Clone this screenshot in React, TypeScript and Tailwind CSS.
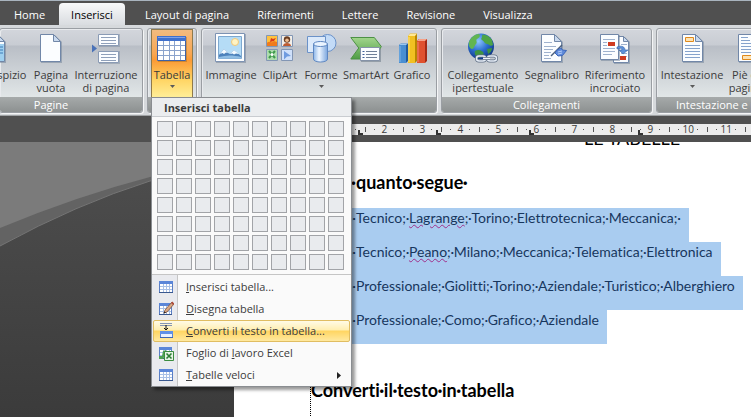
import { Fragment } from 'react';
import type { ReactNode } from 'react';
import clsx from 'clsx';

const tabs = ['Home', 'Inserisci', 'Layout di pagina', 'Riferimenti', 'Lettere', 'Revisione', 'Visualizza'];

/* ---------- Large ribbon icons ---------- */

function Icon({ children }: { children: ReactNode }) {
  return (
    <svg className="w-8 h-8 shrink-0" viewBox="0 0 32 32" fill="none" aria-hidden="true">
      {children}
    </svg>
  );
}

function PageShape({ x = 5, y = 2, w = 21, h = 28, fold = 7 }) {
  return (
    <>
      <path d={`M${x + 1} ${y + 1}h${w - fold}l${fold} ${fold}v${h - fold}h-${w}z`} fill="#6d7f96" opacity="0.5" />
      <path
        d={`M${x + 0.5} ${y + 0.5}h${w - fold - 1}l${fold} ${fold}v${h - fold - 1}h-${w - 1}z`}
        fill="#fbfdff"
        stroke="#7187a8"
      />
      <path d={`M${x + w - fold - 0.5} ${y + 0.5}v${fold}h${fold}z`} fill="#c9d9ee" stroke="#7187a8" />
    </>
  );
}

const CoverIcon = () => (
  <Icon>
    <PageShape x={5} w={21} />
    <path d="M7 12h18v17H7z" fill="#9fd0f0" />
    <path d="M18 15h6M18 18h6M18 21h6" stroke="#3d7db8" />
  </Icon>
);

const BlankPageIcon = () => (
  <Icon>
    <PageShape />
  </Icon>
);

const PageBreakIcon = () => (
  <Icon>
    <path d="M9 2h21v13H9zM9 19h21v13H9z" fill="#6d7f96" opacity="0.4" />
    <path d="M8.500 2.500h20v11h-20zM8.500 19.500h20v11h-20z" fill="#fbfdff" stroke="#8a9bb5" />
    <path d="M11 5.500h15M11 8.500h15M11 11.500h15M11 22.500h15M11 25.500h15M11 28.500h15" stroke="#8fa0ba" />
    <path d="M2 12.500l5 4-5 4z" fill="#4a72b8" />
  </Icon>
);

const TableIcon = () => (
  <Icon>
    <path d="M2 5h29v25H2z" fill="#7a5a20" opacity="0.35" />
    <path d="M1.500 4.500h28v24h-28z" fill="#fff" stroke="#3e62a8" />
    <path d="M1 4h29v5H1z" fill="#4070cc" />
    <path d="M2 5h27v1H2z" fill="#7fa2e8" />
    <path d="M2 13.500h27M2 18.500h27M2 23.500h27M7.500 9v19M13.500 9v19M18.500 9v19M24.500 9v19" stroke="#8ba3cc" />
  </Icon>
);

const ImageIcon = () => (
  <Icon>
    <path d="M1 2h30v29H1z" fill="#5d6f88" opacity="0.4" />
    <path d="M.5 1.500h29v28H.5z" fill="#fdfeff" stroke="#7d93b3" />
    <path d="M3.500 4.500h23v22h-23z" fill="#b5dcf6" stroke="#7ea9d0" />
    <circle cx="20" cy="10" r="3.500" fill="#fff3c4" stroke="#f0c878" />
    <path d="M4 23l5-6 4 4 2 1 4-4 7 6v2H4z" fill="#4d82bc" />
    <path d="M5 22l4-5 4 4-2-.5-2 1.500-1.500-1zM15 22l4-4 5 4-3-.5-2 1-1.500-1z" fill="#f3faff" />
    <path d="M4 25c7-2 14-2 22 0v1.500H4z" fill="#8fbde4" />
  </Icon>
);

const ClipArtIcon = () => (
  <Icon>
    <path d="M2.500 3.500h11v11h-11z" fill="#ffc23e" stroke="#8296b4" />
    <path d="M3 11c3-3 4 1 7-2l3 1v4H3z" fill="#f07a1c" />
    <path d="M7 6l2 1 3-1-2 3-4 1z" fill="#d93a1c" />
    <path d="M17.500 3.500h11v11h-11z" fill="#f3efe9" stroke="#8296b4" />
    <circle cx="23" cy="7.500" r="3.200" fill="#6b3d22" />
    <circle cx="23" cy="8.300" r="1.800" fill="#f0bd90" />
    <path d="M19 14c0-4 8-4 8 0z" fill="#bd5c31" />
    <path d="M2.500 17.500h11v11h-11z" fill="#aedcae" stroke="#8296b4" />
    <path d="M5 19l6 7M11 19l-6 7" stroke="#3f9a4c" strokeWidth="2" />
    <circle cx="8" cy="22.500" r="1.500" fill="#fff" />
    <path d="M17.500 17.500h11v11h-11z" fill="#cfe0fa" stroke="#8296b4" />
    <path d="M20 19l7 5-4 .5-3 3z" fill="#6f9be0" />
  </Icon>
);

const ShapesIcon = () => (
  <Icon>
    <defs>
      <linearGradient id="cyl" x1="0" x2="1">
        <stop offset="0" stopColor="#8db6e8" />
        <stop offset="0.4" stopColor="#eef6ff" />
        <stop offset="1" stopColor="#7ba6de" />
      </linearGradient>
    </defs>
    <circle cx="22.500" cy="11" r="8.500" fill="#c3dbf7" stroke="#6b92c9" />
    <path d="M2.500 4.500h18v16h-18z" fill="#dceafb" stroke="#6b92c9" />
    <path d="M8.500 12v15c0 4 14 4 14 0V12z" fill="url(#cyl)" stroke="#5f88c2" />
    <ellipse cx="15.500" cy="12" rx="7" ry="2.500" fill="#eaf4ff" stroke="#5f88c2" />
  </Icon>
);

const SmartArtIcon = () => (
  <Icon>
    <defs>
      <linearGradient id="smart" x1="0" y1="0" x2="0" y2="1">
        <stop offset="0" stopColor="#a2d58c" />
        <stop offset="1" stopColor="#4f9d45" />
      </linearGradient>
    </defs>
    <path d="M.8 5.500h23.500l7 9-7 12.500H.8l8-11z" fill="url(#smart)" stroke="#4d9145" />
    <path d="M11 17h20v13H11z" fill="#4c5c6c" opacity="0.4" />
    <path d="M10.500 15.500h19v13h-19z" fill="#fbfdff" stroke="#8593a8" />
    <path d="M16 19.500h11M16 22.500h11M16 25.500h11" stroke="#6f7f98" />
    <path d="M12.500 19.500h2M12.500 22.500h2M12.500 25.500h2" stroke="#3f5f98" />
  </Icon>
);

const ChartIcon = () => (
  <Icon>
    <path d="M3 13l2-1.500h7V29l-2 2H3z" fill="#225a9d" />
    <path d="M3 13h7v18H3z" fill="#4a8fd2" />
    <path d="M3 13l2-1.500h7L10 13z" fill="#9cc8ef" />
    <path d="M12 4l2-2.500h7V29l-2 2h-7z" fill="#b98600" />
    <path d="M12 4h7v27h-7z" fill="#f1c022" />
    <path d="M12 4l2-2.500h7L19 4z" fill="#ffe893" />
    <path d="M21 9l2-2h8v22l-2 2h-8z" fill="#a42a16" />
    <path d="M21 9h8v22h-8z" fill="#e0512f" />
    <path d="M21 9l2-2h8l-2 2z" fill="#f7a187" />
    <path d="M4 14v16" stroke="#7fb4e6" />
    <path d="M13 5v25" stroke="#ffe278" />
    <path d="M22 10v20" stroke="#f28a6c" />
  </Icon>
);

const GlobeLinkIcon = () => (
  <Icon>
    <defs>
      <radialGradient id="globe" cx="0.4" cy="0.3" r="0.75">
        <stop offset="0" stopColor="#8ec6ff" />
        <stop offset="0.5" stopColor="#2c6fd0" />
        <stop offset="1" stopColor="#0d2f7c" />
      </radialGradient>
    </defs>
    <circle cx="14" cy="14.500" r="13" fill="url(#globe)" />
    <path d="M2 10C4 5 8 2 12 2c2 2 0 4-2 5s1 3-1 5-2 5-4 5-4-4-3-7z" fill="#62b552" />
    <path d="M15 3c4-1 8 2 10 5l1 5c-3 2-4-1-6-1s-3-3-5-4 1-3 0-5z" fill="#4ea446" />
    <path d="M8 19c3-2 6-1 8 1s-1 5-4 6c-3-1-5-4-4-7zM20 17l5-1c0 3-2 5-4 6z" fill="#3f9440" />
    <rect x="9.500" y="24" width="9" height="5" rx="2.500" stroke="#5e6e84" strokeWidth="3" />
    <rect x="9.500" y="24" width="9" height="5" rx="2.500" stroke="#e6edf6" strokeWidth="1.500" />
    <rect x="20.500" y="24" width="9" height="5" rx="2.500" stroke="#5e6e84" strokeWidth="3" />
    <rect x="20.500" y="24" width="9" height="5" rx="2.500" stroke="#e6edf6" strokeWidth="1.500" />
    <path d="M16 26.500h7" stroke="#5e6e84" strokeWidth="3" />
    <path d="M16 26.500h7" stroke="#eef3fa" strokeWidth="1.500" />
  </Icon>
);

const BookmarkIcon = () => (
  <Icon>
    <PageShape />
    <path d="M8 10.500h8M8 14.500h12M8 17.500h9M8 20.500h7M8 23.500h5M8 26.500h7" stroke="#9fb2ce" />
    <path d="M15 24l11-11" stroke="#4a5f7c" strokeWidth="1.500" />
    <path d="M21 18l4-2 1.500 2 4 .5-4 5-4.500.5-3-3z" fill="#5f8bdc" stroke="#3c66b8" />
    <path d="M22 20l4-1M22 22l4-1" stroke="#b5ccf5" />
  </Icon>
);

const CrossRefIcon = () => (
  <Icon>
    <PageShape x={14} y={4} w={16} h={27} fold={5} />
    <PageShape x={1} y={2} w={19} h={26} fold={0} />
    <path d="M4 7.500h12M4 10.500h4M4 13.500h4M4 16.500h12M4 19.500h12M4 22.500h9" stroke="#9fb2ce" />
    <path d="M9 10h7v4H9z" fill="#cf3b20" />
    <path d="M22 12.500h6M22 24.500h6M22 21.500h6" stroke="#9fb2ce" />
    <path d="M21 24h6v4h-6z" fill="#cf3b20" />
    <path d="M18 15c5-2 8 0 8 3h3l-5 4-4-4h3c0-2-2-2-5-1z" fill="#5c8fd8" stroke="#3766a8" strokeWidth="0.600" />
  </Icon>
);

const HeaderIcon = () => (
  <Icon>
    <PageShape x={6} />
    <path d="M9.500 5.500h8v4h-8z" fill="#fde3b5" stroke="#e08a1c" />
    <path d="M9 13.500h15M9 16.500h15M9 19.500h15M9 22.500h15M9 25.500h15" stroke="#86a3cc" />
  </Icon>
);

const FooterIcon = () => (
  <Icon>
    <PageShape x={8} />
    <path d="M11 5.500h7M11 8.500h9M11 11.500h15M11 14.500h15M11 17.500h15M11 20.500h15" stroke="#86a3cc" />
    <path d="M12.500 23.500h9v4h-9z" fill="#fde3b5" stroke="#e08a1c" />
  </Icon>
);

/* ---------- Small menu icons ---------- */

function SmallGrid({ w = 14 }: { w?: number }) {
  return (
    <>
      <path d={`M1.500 2.500h${w - 1}v11h-${w - 1}z`} fill="#fff" stroke="#5a7ec4" />
      <path d={`M1 2h${w}v3H1z`} fill="#5b86d8" />
      <path d={`M2 7.500h${w - 2}M2 10.500h${w - 2}M5.500 5v8M8.500 5v8M11.500 5v8`} stroke="#a9c0e6" />
      <path d={`M1 13.500h${w}`} stroke="#39588f" />
    </>
  );
}

const smallIcons = {
  grid: <SmallGrid />,
  draw: (
    <>
      <SmallGrid w={13} />
      <path d="M6 12l1-3 7-8 2 2-7 8z" fill="#d9a884" stroke="#80503a" strokeWidth="0.800" />
      <path d="M13 2l1.500-1.500 1.500 2L15 4z" fill="#b04a3a" />
      <path d="M5.500 12.500l1-2 1.500 1.200z" fill="#222" />
    </>
  ),
  convert: (
    <>
      <path d="M2 .5h12M2 2.500h12" stroke="#8797b3" />
      <path d="M8 2v5M6 5l2 2 2-2" stroke="#111" />
      <path d="M2.500 8.500h12v6h-12z" fill="#e8f1ff" stroke="#5a86d8" />
      <path d="M2 8h13v3H2z" fill="#5f90e6" />
      <path d="M2 14.500h13" stroke="#3d66b4" />
    </>
  ),
  excel: (
    <>
      <SmallGrid w={13} />
      <path d="M5 6l3-1v3l-3 6H1v-3h3z" fill="#4da152" />
      <path d="M6.500 6.500h9v9h-9z" fill="#e5f4e3" stroke="#3b8c3f" />
      <path d="M8.500 8.500l5 5M13.500 8.500l-5 5" stroke="#2b7d33" strokeWidth="1.600" />
    </>
  ),
};

/* ---------- Ribbon ---------- */

function RibbonButton({
  icon,
  lines,
  width,
  arrow = false,
}: {
  icon: ReactNode;
  lines: string[];
  width: string;
  arrow?: boolean;
}) {
  return (
    <button type="button" className={clsx('flex flex-col items-center shrink-0 pt-[3px] h-[68px]', width)}>
      {icon}
      <span className="mt-1 flex flex-col items-center whitespace-nowrap leading-[13px] text-[#3b3b3b]">
        {lines.map((line) => (
          <span key={line}>{line}</span>
        ))}
      </span>
      {arrow && <DownArrow />}
    </button>
  );
}

function DownArrow() {
  return (
    <svg className="w-[5px] h-[3px] mt-1" viewBox="0 0 5 3" aria-hidden="true">
      <path d="M0 0h5L2.500 3z" fill="#5a5a5a" />
    </svg>
  );
}

function RibbonGroup({ label, className, children }: { label: string; className?: string; children: ReactNode }) {
  return (
    <section
      className={clsx(
        'flex flex-col shrink-0 rounded-[3px] border border-[#9a9ea3] shadow-[1px_1px_0_#f4f5f6,inset_1px_1px_0_#e8eaed]',
        'bg-[linear-gradient(#d3d6dc,#c8ccd3_16px,#b9bec6_17px,#e1e6e7_68px)]',
        className,
      )}
    >
      <div className="flex px-px h-[68px]">{children}</div>
      <h2 className="h-[15px] leading-[15px] text-center whitespace-nowrap text-white rounded-b-[2px] bg-linear-to-b from-[#a6aaaa] to-[#8d9191]">
        {label}
      </h2>
    </section>
  );
}

function MenuItem({
  icon,
  children,
  active = false,
  submenu = false,
}: {
  icon: keyof typeof smallIcons;
  children: ReactNode;
  active?: boolean;
  submenu?: boolean;
}) {
  return (
    <button
      type="button"
      role="menuitem"
      className={clsx(
        'flex items-center w-full h-[22px] border rounded-[2px] text-left whitespace-nowrap text-[#3b3b3b]',
        active
          ? 'border-[#e0bd62] bg-[linear-gradient(#fffbe6,#ffeeb0_45%,#ffd561_50%,#ffe9a0)]'
          : 'border-transparent',
      )}
    >
      <svg className="w-4 h-4 ml-1 mr-3" viewBox="0 0 16 16" fill="none" aria-hidden="true">
        {smallIcons[icon]}
      </svg>
      <span className="flex-1">{children}</span>
      {submenu && (
        <svg className="w-1 h-[7px] mr-2" viewBox="0 0 4 7" aria-hidden="true">
          <path d="M0 0l4 3.500L0 7z" fill="#222" />
        </svg>
      )}
    </button>
  );
}

function TableMenu() {
  return (
    <div
      role="menu"
      className="absolute left-0 top-full z-20 w-[201px] border border-[#8a8d91] bg-[#fafafa] shadow-[3px_3px_3px_rgba(0,0,0,0.4)]"
    >
      <h3 className="h-[19px] pl-3 leading-[20px] font-bold text-[#3b3b3b] bg-[#ebedef] border-b border-[#c9ccd0]">
        Inserisci tabella
      </h3>
      <div className="grid grid-cols-[repeat(10,16px)] gap-[3px] px-[5px] py-1">
        {Array.from({ length: 80 }, (_, i) => (
          <button
            key={i}
            type="button"
            aria-label={`${(i % 10) + 1} x ${Math.floor(i / 10) + 1}`}
            className="h-4 border border-[#a2a4a8] bg-[#e9ebee]"
          />
        ))}
      </div>
      <div className="border-t border-[#c5c5c5] pt-px px-px bg-[linear-gradient(90deg,#e9eaee_25px,#c5c5c5_25px,#c5c5c5_26px,#fafafa_26px)]">
        <MenuItem icon="grid">
          <u>I</u>nserisci tabella...
        </MenuItem>
        <MenuItem icon="draw">
          <u>D</u>isegna tabella
        </MenuItem>
        <MenuItem icon="convert" active>
          <u>C</u>onverti il testo in tabella...
        </MenuItem>
        <MenuItem icon="excel">
          Foglio di <u>l</u>avoro Excel
        </MenuItem>
        <MenuItem icon="grid" submenu>
          <u>T</u>abelle veloci
        </MenuItem>
      </div>
    </div>
  );
}

function Ribbon() {
  return (
    <div className="flex gap-1 pt-[3px] pb-[2px] border-b border-[#a0a3a5] bg-[#d6d9dc]">
      <RibbonGroup label="Pagine" className="w-36 -ml-px overflow-hidden [&>div]:justify-end [&>h2]:pr-10">
        <RibbonButton icon={<CoverIcon />} lines={['Frontespizio']} width="w-[72px]" />
        <RibbonButton icon={<BlankPageIcon />} lines={['Pagina', 'vuota']} width="w-10" />
        <RibbonButton icon={<PageBreakIcon />} lines={['Interruzione', 'di pagina']} width="w-[70px]" />
      </RibbonGroup>

      <RibbonGroup label="Tabelle" className="w-[50px]">
        <div className="relative ml-[2px]">
          <button
            type="button"
            aria-haspopup="menu"
            aria-expanded="true"
            className="flex flex-col items-center w-[42px] h-[68px] pt-[2px] border border-b-0 border-[#8f7a4b] bg-[linear-gradient(#f2bb80,#f9a752_35%,#fb9a35_45%,#ffd565_75%,#ffee98)] text-[#3b3b3b]"
          >
            <TableIcon />
            <span className="mt-1 leading-[13px] whitespace-nowrap">Tabella</span>
            <DownArrow />
          </button>
          <TableMenu />
        </div>
      </RibbonGroup>

      <RibbonGroup label="Illustrazioni" className="w-[236px]">
        <RibbonButton icon={<ImageIcon />} lines={['Immagine']} width="w-14" />
        <RibbonButton icon={<ClipArtIcon />} lines={['ClipArt']} width="w-[42px]" />
        <RibbonButton icon={<ShapesIcon />} lines={['Forme']} width="w-10" arrow />
        <RibbonButton icon={<SmartArtIcon />} lines={['SmartArt']} width="w-[50px]" />
        <RibbonButton icon={<ChartIcon />} lines={['Grafico']} width="w-[42px]" />
      </RibbonGroup>

      <RibbonGroup label="Collegamenti" className="w-[211px]">
        <RibbonButton icon={<GlobeLinkIcon />} lines={['Collegamento', 'ipertestuale']} width="w-20" />
        <RibbonButton icon={<BookmarkIcon />} lines={['Segnalibro']} width="w-[58px]" />
        <RibbonButton icon={<CrossRefIcon />} lines={['Riferimento', 'incrociato']} width="w-[68px]" />
      </RibbonGroup>

      <RibbonGroup label="Intestazione e piè di pagina" className="w-[180px]">
        <RibbonButton icon={<HeaderIcon />} lines={['Intestazione']} width="w-[68px]" arrow />
        <RibbonButton icon={<FooterIcon />} lines={['Piè di', 'pagina']} width="w-10" />
      </RibbonGroup>
    </div>
  );
}

/* ---------- Ruler and document ---------- */

function TabStop({ className }: { className: string }) {
  return <span className={clsx('absolute bottom-0 w-[5px] h-[5px] border-l-2 border-b-2 border-[#333]', className)} />;
}

function Ruler() {
  return (
    <div className="bg-[#505050] pt-[8px] pb-[7px]">
      <div className="relative ml-[234px] pl-[79px] flex overflow-hidden h-[11px] bg-[#ececec] text-[10px] leading-[11px] text-[#3c3c3c]">
        {Array.from({ length: 12 }, (_, i) => (
          <div key={i} className="grid grid-cols-4 shrink-0 w-[38px] justify-items-center items-center">
            <span className="w-px h-px bg-[#555]" />
            <span className="w-px h-[5px] bg-[#555]" />
            <span className="w-px h-px bg-[#555]" />
            <span>{i + 1}</span>
          </div>
        ))}
        <TabStop className="left-[124px]" />
        <TabStop className="left-[202px]" />
        <TabStop className="left-[295px]" />
        <TabStop className="left-[404px]" />
      </div>
    </div>
  );
}

function Backdrop() {
  return (
    <div className="w-[234px] shrink-0 bg-linear-to-b from-[#4f4f4f] to-[#3b3b3b]">
      <svg className="block w-full" viewBox="0 0 234 120" aria-hidden="true">
        <path d="M0 0h234v22L150 39Q77 62 0 104z" fill="#636363" />
        <path d="M0 104Q77 62 150 39L234 22" fill="none" stroke="#757575" />
        <path d="M0 0h234v18L150 35Q77 54 0 86z" fill="#7b7b7b" />
      </svg>
    </div>
  );
}

/* Prints the words with a formatting mark in place of each space */
function Marked({ children, dot = 'w-[3px]' }: { children: string; dot?: string }) {
  return children.split(' ').map((word, i) => (
    <Fragment key={i}>
      {i > 0 && <span className={clsx('inline-flex justify-center', dot)}>·</span>}
      {word}
    </Fragment>
  ));
}

/* First word of a line, partly under the open menu */
function Lead({ children }: { children: string }) {
  return <span className="inline-flex justify-end w-[46px]">{children}·</span>;
}

function Misspelled({ children }: { children: string }) {
  return (
    <span className="underline decoration-wavy decoration-1 decoration-[#a0308a] underline-offset-1">{children}</span>
  );
}

function SelectedLine({ children }: { children: ReactNode }) {
  return <p className="h-[34px] w-max pr-2 leading-5 bg-[#a9ccf0] text-[#17365d]">{children}</p>;
}

function Document() {
  return (
    <main className="flex-1 min-w-0 overflow-hidden bg-white pl-[76px] font-[Lato,sans-serif] text-[14px] whitespace-nowrap text-black [font-variant-ligatures:none]">
      <div className="-mt-4 h-6 leading-6 pl-[274px] text-[18px]">LE TABELLE</div>
      <h2 className="mt-5 leading-6 text-[18px] font-bold">
        <Lead>Copia</Lead>
        <Marked dot="w-1">quanto segue </Marked>
      </h2>
      <div className="mt-[14px]">
        <SelectedLine>
          <Lead>Istituto</Lead>
          <Marked>Tecnico; </Marked>
          <Misspelled>Lagrange</Misspelled>
          <Marked>; Torino; Elettrotecnica; Meccanica; </Marked>
        </SelectedLine>
        <SelectedLine>
          <Lead>Istituto</Lead>
          <Marked>Tecnico; </Marked>
          <Misspelled>Peano</Misspelled>
          <Marked>; Milano; Meccanica; Telematica; Elettronica</Marked>
        </SelectedLine>
        <SelectedLine>
          <Lead>Istituto</Lead>
          <Marked>Professionale; Giolitti; Torino; Aziendale; Turistico; Alberghiero</Marked>
        </SelectedLine>
        <SelectedLine>
          <Lead>Istituto</Lead>
          <Marked>Professionale; Como; Grafico; Aziendale</Marked>
        </SelectedLine>
      </div>
      <h2 className="mt-[34px] pb-4 leading-6 text-[18px] font-bold border-l border-dotted border-black">
        <Marked dot="w-1">Converti il testo in tabella</Marked>
      </h2>
    </main>
  );
}

export default function App() {
  return (
    <div className="min-h-screen flex flex-col overflow-hidden bg-[#505050] font-['Open_Sans','Noto_Sans',sans-serif] text-[11px]">
      <nav className="flex h-[25px] pt-[2px] border-t border-[#a9b4be] bg-[#505050]">
        {tabs.map((tab) => (
          <a
            key={tab}
            href="#"
            className={clsx(
              'leading-[23px] whitespace-nowrap',
              tab === 'Inserisci'
                ? 'px-3 mr-[6px] rounded-t-[4px] bg-linear-to-b from-[#f8f9fa] to-[#d9dce0] text-black'
                : 'px-[14px] text-white',
            )}
          >
            {tab}
          </a>
        ))}
      </nav>
      <Ribbon />
      <Ruler />
      <div className="flex flex-1">
        <Backdrop />
        <Document />
      </div>
    </div>
  );
}
